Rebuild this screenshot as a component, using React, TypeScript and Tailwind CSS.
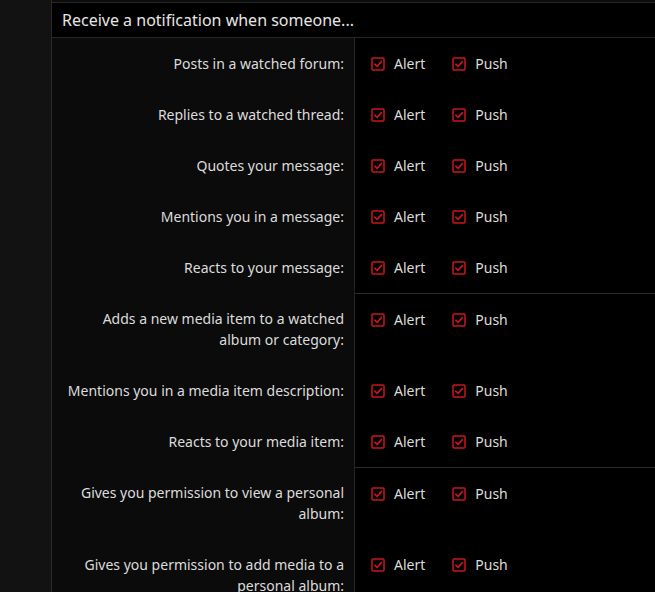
import React from "react";

type Row = { label: string; group?: boolean };

const rows: Row[] = [
  { label: "Posts in a watched forum:" },
  { label: "Replies to a watched thread:" },
  { label: "Quotes your message:" },
  { label: "Mentions you in a message:" },
  { label: "Reacts to your message:" },
  { label: "Adds a new media item to a watched album or category:", group: true },
  { label: "Mentions you in a media item description:" },
  { label: "Reacts to your media item:" },
  { label: "Gives you permission to view a personal album:", group: true },
  { label: "Gives you permission to add media to a personal album:" },
];

function CheckBox() {
  return (
    <svg width="14" height="14" viewBox="0 0 14 14" className="shrink-0">
      <rect x="1" y="1" width="12" height="12" rx="1" fill="none" stroke="#c8161d" strokeWidth="1.5" />
      <path d="M3.8 7.2 L6.1 9.4 L10.4 4.6" fill="none" stroke="#c8161d" strokeWidth="1.6" strokeLinecap="round" strokeLinejoin="round" />
    </svg>
  );
}

function Option({ text }: { text: string }) {
  return (
    <label className="flex items-center gap-[9px]">
      <CheckBox />
      <span>{text}</span>
    </label>
  );
}

export default function App() {
  return (
    <div
      className="flex h-[592px] w-[655px] overflow-hidden bg-[#141414] text-[14px] leading-[21px] text-[#dcdcdc]"
      style={{ fontFamily: '"Noto Sans", "Open Sans", sans-serif' }}
    >
      <div className="w-[51px] shrink-0 bg-[#121212]" />
      <div className="flex min-w-0 flex-1 flex-col border-l border-[#2a2a2a]">
        <div className="h-[2px] shrink-0 bg-[#0b0b0b]" />
        <div className="flex h-[36px] shrink-0 items-center border-y border-[#262626] bg-black px-[10px] text-[16px] text-[#e6e6e6]">
          Receive a notification when someone...
        </div>
        <div className="flex flex-col">
          {rows.map((r) => (
            <div key={r.label} className="flex">
              <div className="w-[303px] shrink-0 border-r border-[#242424] bg-[#0b0b0b] px-[10px] pt-[15px] pb-[15px] text-right">
                {r.label}
              </div>
              <div
                className={
                  "flex flex-1 items-start gap-[27px] bg-black pl-[16px] pt-[15px] " +
                  (r.group ? "border-t border-[#2a2a2a]" : "")
                }
              >
                <Option text="Alert" />
                <Option text="Push" />
              </div>
            </div>
          ))}
        </div>
        <div className="border-t border-[#2a2a2a]" />
      </div>
    </div>
  );
}
